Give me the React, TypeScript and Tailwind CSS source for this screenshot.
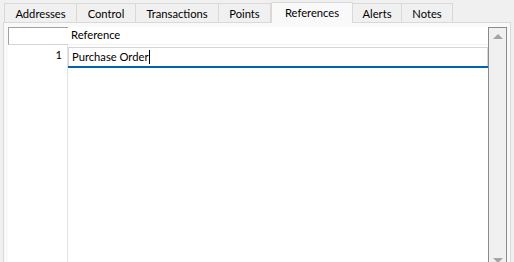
import { useState } from "react";

const tabs = [
  { label: "Addresses", w: "w-[73px]" },
  { label: "Control", w: "w-[59px]" },
  { label: "Transactions", w: "w-[83px]" },
  { label: "Points", w: "w-[52px]" },
  { label: "References", w: "w-[82px]" },
  { label: "Alerts", w: "w-[49px]" },
  { label: "Notes", w: "w-[51px]" },
];

export default function App() {
  const [active, setActive] = useState("References");

  return (
    <div className="h-[262px] w-[514px] overflow-hidden bg-[#f0f0f0] font-['Lato',sans-serif] text-[11.2px] text-black">
      {/* tab strip */}
      <div className="flex h-[22px] items-end pl-[4px]">
        {tabs.map((t) =>
          t.label === active ? (
            <button
              key={t.label}
              onClick={() => setActive(t.label)}
              className={`${t.w} relative z-10 -mb-px h-[21px] border border-b-0 border-[#d9d9d9] bg-[#f9f9f9] pb-[1px] leading-none`}
            >
              {t.label}
            </button>
          ) : (
            <button
              key={t.label}
              onClick={() => setActive(t.label)}
              className={`${t.w} h-[19px] border border-b-0 border-l-0 border-[#d9d9d9] bg-[#f0f0f0] pt-px leading-none first:border-l`}
            >
              {t.label}
            </button>
          )
        )}
      </div>

      {/* panel */}
      <div className="ml-[3px] mr-[3px] h-[240px] border border-b-0 border-[#d9d9d9] bg-[#f9f9f9] pl-[4px] pr-[3px] pt-[4px]">
        <div className="flex h-full">
          {/* grid */}
          <div className="flex flex-1 flex-col bg-white">
            <div className="flex h-[18px]">
              <div className="w-[60px] border border-r-0 border-[#a0a0a0] border-b-[#d6d6d6]" />
              <div className="flex flex-1 items-center border-b border-[#f0f0f0] pl-[3px]">Reference</div>
            </div>
            <div className="flex flex-1">
              <div className="flex w-[60px] flex-col border-r border-[#e3e3e3]">
                <div className="flex h-[20px] items-center justify-end pr-[5px]">1</div>
              </div>
              <div className="flex-1 pt-[2px]">
                <div className="flex h-[19px] items-center border border-b-0 border-[#d6d6d6] pl-[3px]">
                  <span>Purchase Order</span>
                  <span className="ml-px h-[14px] w-px bg-black" />
                </div>
                <div className="h-[2px] bg-[#0063b1]" />
              </div>
            </div>
          </div>

          {/* scrollbar */}
          <div className="flex w-[19px] flex-col items-center justify-between border border-b-0 border-[#8a8a8a] bg-[#f0f0f0]">
            <div className="mt-[6px] h-0 w-0 border-x-[5px] border-b-[5px] border-x-transparent border-b-[#a3a3a3]" />
            <div className="mb-[-1px] h-0 w-0 border-x-[5px] border-t-[5px] border-x-transparent border-t-[#a3a3a3]" />
          </div>
        </div>
      </div>
    </div>
  );
}
